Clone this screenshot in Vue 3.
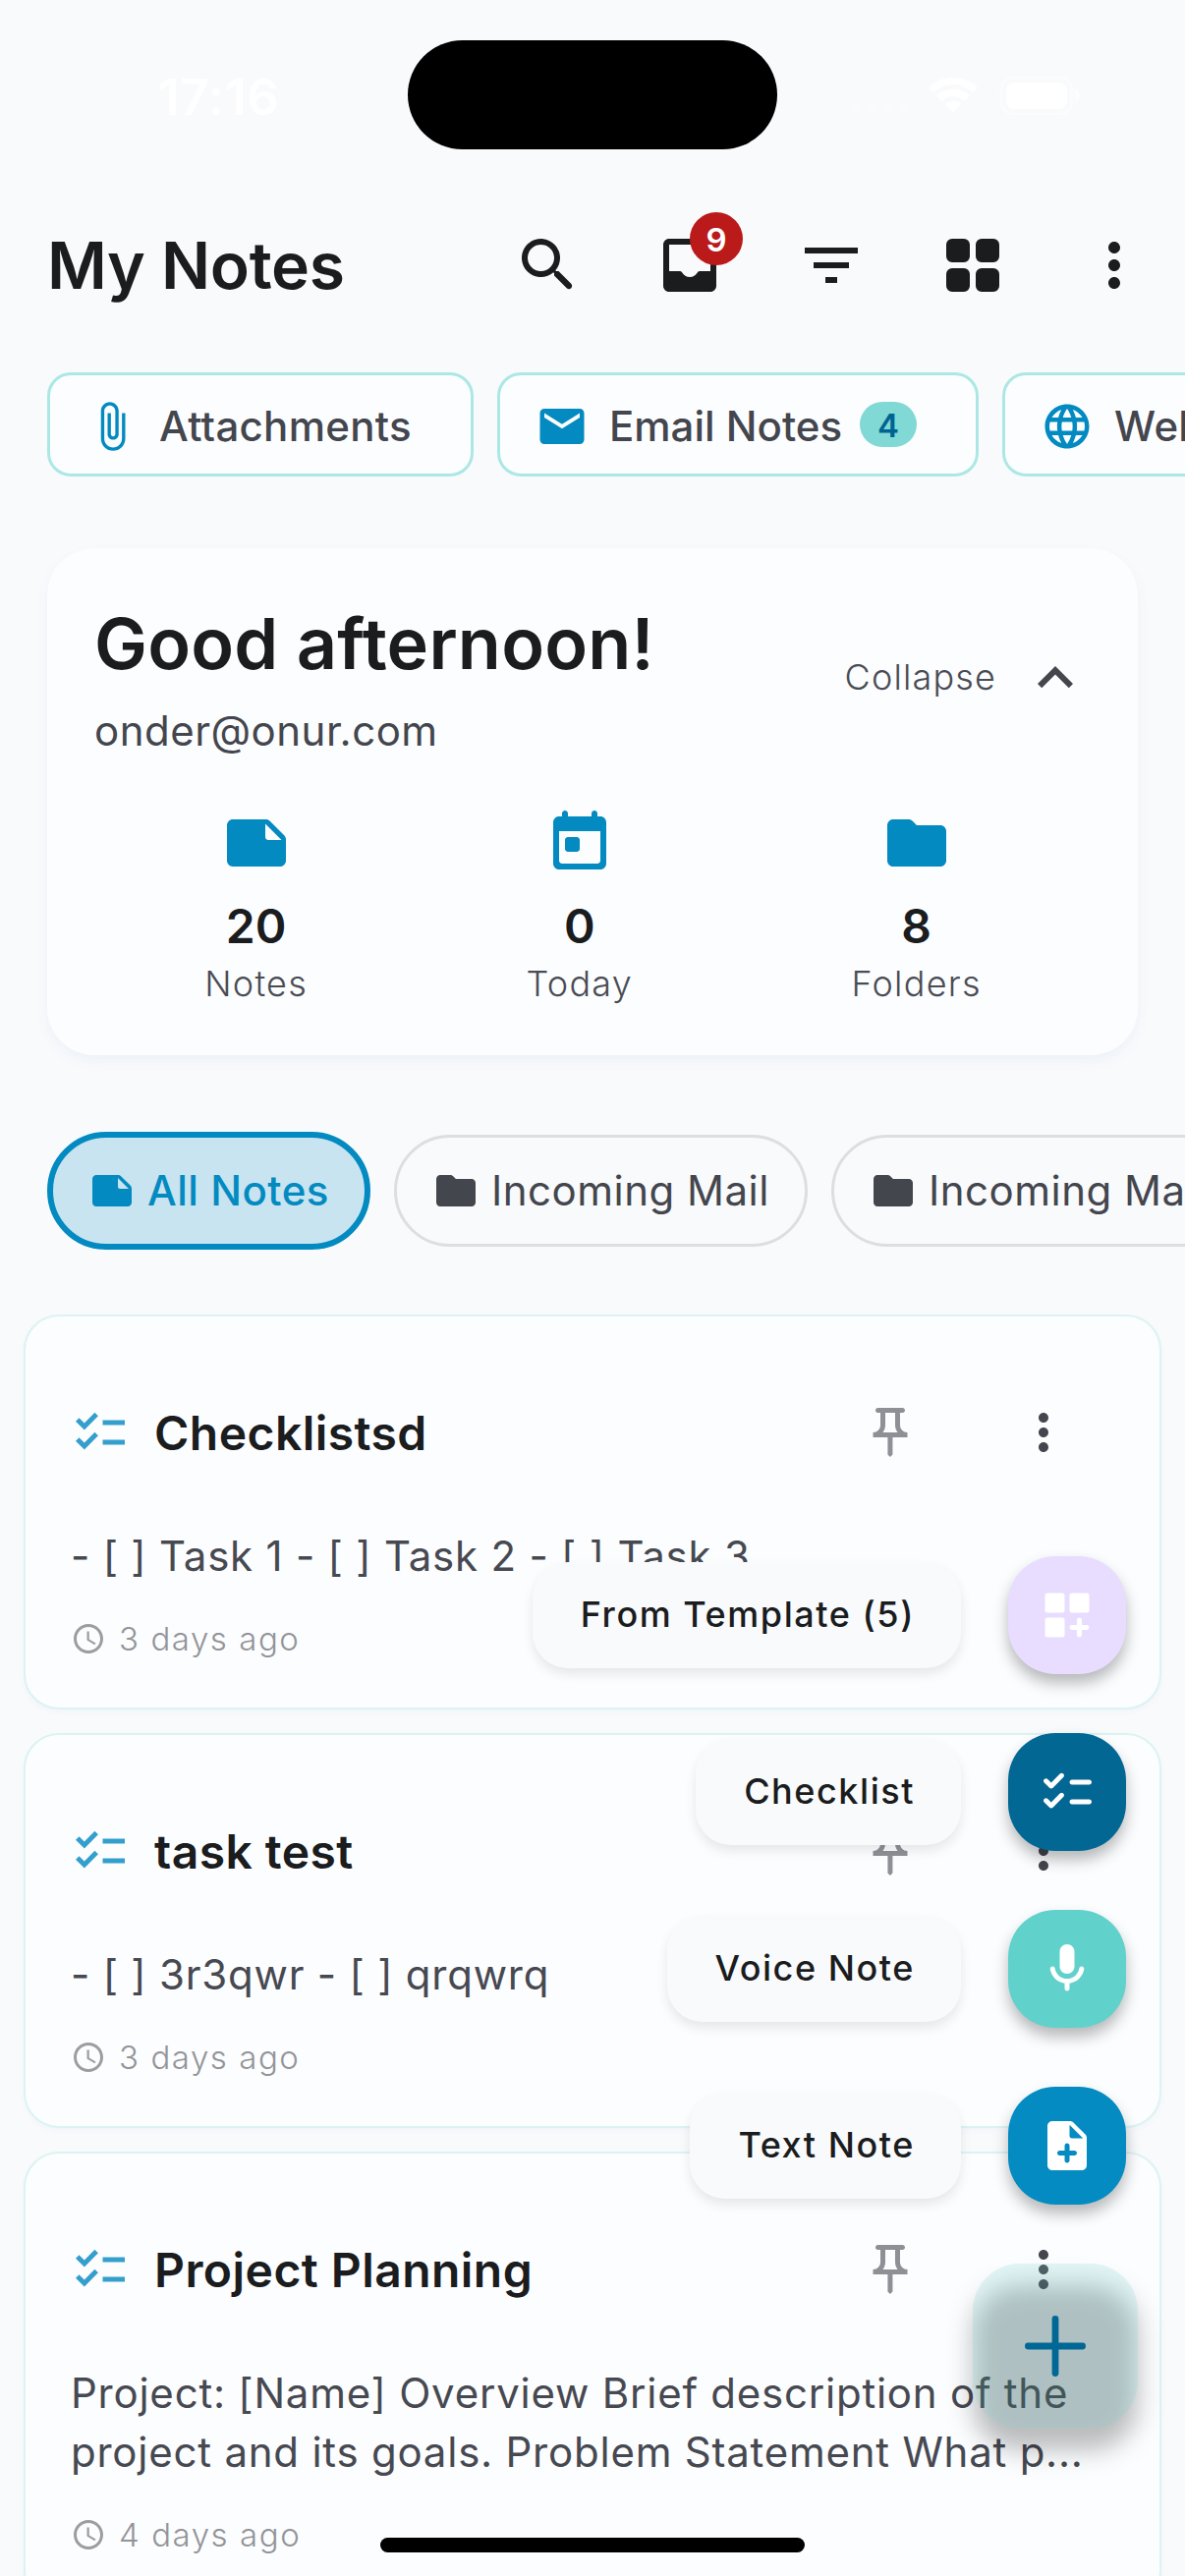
<script setup>
const icons = {
  search:
    'M15.5 14h-.79l-.28-.27c1.2-1.4 1.82-3.31 1.48-5.34-.47-2.78-2.79-5-5.59-5.34-4.23-.52-7.79 3.04-7.27 7.27.34 2.8 2.56 5.12 5.34 5.59 2.03.34 3.94-.28 5.34-1.48l.27.28v.79l4.25 4.25c.41.41 1.08.41 1.49 0 .41-.41.41-1.08 0-1.49L15.5 14zm-6 0C7.01 14 5 11.99 5 9.5S7.01 5 9.5 5 14 7.01 14 9.5 11.99 14 9.5 14z',
  inbox:
    'M19 3H5c-1.1 0-2 .9-2 2v14c0 1.1.9 2 2 2h14c1.1 0 2-.9 2-2V5c0-1.1-.9-2-2-2zm0 11h-3.56c-.36 0-.68.19-.86.5-.52.9-1.47 1.5-2.58 1.5s-2.06-.6-2.58-1.5c-.18-.31-.51-.5-.86-.5H5V5h14v9z',
  filter: 'M10 18h4v-2h-4v2zM3 6v2h18V6H3zm3 7h12v-2H6v2z',
  grid:
    'M5 3h4a2 2 0 0 1 2 2v4a2 2 0 0 1-2 2H5a2 2 0 0 1-2-2V5a2 2 0 0 1 2-2zM15 3h4a2 2 0 0 1 2 2v4a2 2 0 0 1-2 2h-4a2 2 0 0 1-2-2V5a2 2 0 0 1 2-2zM5 13h4a2 2 0 0 1 2 2v4a2 2 0 0 1-2 2H5a2 2 0 0 1-2-2v-4a2 2 0 0 1 2-2zM15 13h4a2 2 0 0 1 2 2v4a2 2 0 0 1-2 2h-4a2 2 0 0 1-2-2v-4a2 2 0 0 1 2-2z',
  more:
    'M12 8c1.1 0 2-.9 2-2s-.9-2-2-2-2 .9-2 2 .9 2 2 2zm0 2c-1.1 0-2 .9-2 2s.9 2 2 2 2-.9 2-2-.9-2-2-2zm0 6c-1.1 0-2 .9-2 2s.9 2 2 2 2-.9 2-2-.9-2-2-2z',
  attach:
    'M16.5 6v11.5c0 2.21-1.79 4-4 4s-4-1.79-4-4V5c0-1.38 1.12-2.5 2.5-2.5s2.5 1.12 2.5 2.5v10.5c0 .55-.45 1-1 1s-1-.45-1-1V6H10v9.5c0 1.38 1.12 2.5 2.5 2.5s2.5-1.12 2.5-2.5V5c0-2.21-1.79-4-4-4S7 2.79 7 5v12.5c0 3.04 2.46 5.5 5.5 5.5s5.5-2.46 5.5-5.5V6h-1.5z',
  mail:
    'M20 4H4c-1.1 0-1.99.9-1.99 2L2 18c0 1.1.9 2 2 2h16c1.1 0 2-.9 2-2V6c0-1.1-.9-2-2-2zm0 4l-8 5-8-5V6l8 5 8-5v2z',
  globe:
    'M11.99 2C6.47 2 2 6.48 2 12s4.47 10 9.99 10C17.52 22 22 17.52 22 12S17.52 2 11.99 2zm6.93 6h-2.95c-.32-1.25-.78-2.45-1.38-3.56 1.84.63 3.37 1.91 4.33 3.56zM12 4.04c.83 1.2 1.48 2.53 1.91 3.96h-3.82c.43-1.43 1.08-2.76 1.91-3.96zM4.26 14C4.1 13.36 4 12.69 4 12s.1-1.36.26-2h3.38c-.08.66-.14 1.32-.14 2s.06 1.34.14 2H4.26zm.82 2h2.95c.32 1.25.78 2.45 1.38 3.56-1.84-.63-3.37-1.9-4.33-3.56zm2.95-8H5.08c.96-1.66 2.49-2.93 4.33-3.56C8.81 5.55 8.35 6.75 8.03 8zM12 19.96c-.83-1.2-1.48-2.53-1.91-3.96h3.82c-.43 1.43-1.08 2.76-1.91 3.96zM14.34 14H9.66c-.09-.66-.16-1.32-.16-2s.07-1.35.16-2h4.68c.09.65.16 1.32.16 2s-.07 1.34-.16 2zm.25 5.56c.6-1.11 1.06-2.31 1.38-3.56h2.95c-.96 1.65-2.49 2.93-4.33 3.56zM16.36 14c.08-.66.14-1.32.14-2s-.06-1.34-.14-2h3.38c.16.64.26 1.31.26 2s-.1 1.36-.26 2h-3.38z',
  expandLess: 'M12 8l-6 6 1.41 1.41L12 10.83l4.59 4.58L18 14z',
  note:
    'M21.41 9.41l-4.83-4.83c-.37-.37-.88-.58-1.41-.58H4c-1.1 0-2 .9-2 2v12.01c0 1.1.89 1.99 1.99 1.99H20c1.1 0 2-.9 2-2v-7.17c0-.53-.21-1.04-.59-1.42zM15 5.5l5.5 5.5H16c-.55 0-1-.45-1-1V5.5z',
  today:
    'M19 3h-1V2c0-.55-.45-1-1-1s-1 .45-1 1v1H8V2c0-.55-.45-1-1-1s-1 .45-1 1v1H5c-1.11 0-1.99.9-1.99 2L3 19c0 1.1.89 2 2 2h14c1.1 0 2-.9 2-2V5c0-1.1-.9-2-2-2zm-1 16H6c-.55 0-1-.45-1-1V8h14v10c0 .55-.45 1-1 1zM8 10h3c.55 0 1 .45 1 1v3c0 .55-.45 1-1 1H8c-.55 0-1-.45-1-1v-3c0-.55.45-1 1-1z',
  folder:
    'M10.59 4.59C10.21 4.21 9.7 4 9.17 4H4c-1.1 0-1.99.9-1.99 2L2 18c0 1.1.9 2 2 2h16c1.1 0 2-.9 2-2V8c0-1.1-.9-2-2-2h-8l-1.41-1.41z',
  checklist:
    'M22 7h-9v2h9V7zm0 8h-9v2h9v-2zM5.54 11L2 7.46l1.41-1.41 2.12 2.12 4.24-4.24 1.41 1.41L5.54 11zm0 8L2 15.46l1.41-1.41 2.12 2.12 4.24-4.24 1.41 1.41L5.54 19z',
  pin:
    'M14 4v5c0 1.12.37 2.16 1 3H9c.65-.86 1-1.9 1-3V4h4m3-2H7c-.55 0-1 .45-1 1s.45 1 1 1h1v5c0 1.66-1.34 3-3 3v2h5.97v7l1 1 1-1v-7H19v-2c-1.66 0-3-1.34-3-3V4h1c.55 0 1-.45 1-1s-.45-1-1-1z',
  clock:
    'M11.99 2C6.47 2 2 6.48 2 12s4.47 10 9.99 10C17.52 22 22 17.52 22 12S17.52 2 11.99 2zM12 20c-4.42 0-8-3.58-8-8s3.58-8 8-8 8 3.58 8 8-3.58 8-8 8zm.5-13H11v6l5.25 3.15.75-1.23-4.5-2.67z',
  template:
    'M4 3h6a1 1 0 0 1 1 1v6a1 1 0 0 1-1 1H4a1 1 0 0 1-1-1V4a1 1 0 0 1 1-1zM14 3h6a1 1 0 0 1 1 1v6a1 1 0 0 1-1 1h-6a1 1 0 0 1-1-1V4a1 1 0 0 1 1-1zM4 13h6a1 1 0 0 1 1 1v6a1 1 0 0 1-1 1H4a1 1 0 0 1-1-1v-6a1 1 0 0 1 1-1zM17 13c.55 0 1 .45 1 1v2h2c.55 0 1 .45 1 1s-.45 1-1 1h-2v2c0 .55-.45 1-1 1s-1-.45-1-1v-2h-2c-.55 0-1-.45-1-1s.45-1 1-1h2v-2c0-.55.45-1 1-1z',
  checklistRound:
    'M14 7h7c.55 0 1 .45 1 1s-.45 1-1 1h-7c-.55 0-1-.45-1-1s.45-1 1-1zM14 15h7c.55 0 1 .45 1 1s-.45 1-1 1h-7c-.55 0-1-.45-1-1s.45-1 1-1zM4.83 10.29l-2.12-2.12c-.39-.39-.39-1.02 0-1.41.39-.39 1.02-.39 1.41 0l1.41 1.41 3.54-3.54c.39-.39 1.02-.39 1.41 0 .39.39.39 1.02 0 1.41l-4.24 4.24c-.39.4-1.02.4-1.41.01zM4.83 18.29l-2.12-2.12c-.39-.39-.39-1.02 0-1.41.39-.39 1.02-.39 1.41 0l1.41 1.41 3.54-3.54c.39-.39 1.02-.39 1.41 0 .39.39.39 1.02 0 1.41l-4.24 4.24c-.39.4-1.02.4-1.41.01z',
  mic:
    'M12 14c1.66 0 3-1.34 3-3V5c0-1.66-1.34-3-3-3S9 3.34 9 5v6c0 1.66 1.34 3 3 3zm5.91-3c-.49 0-.9.36-.98.85C16.52 14.2 14.47 16 12 16s-4.52-1.8-4.93-4.15c-.08-.49-.49-.85-.98-.85-.61 0-1.09.54-1 1.14.49 3 2.89 5.35 5.91 5.78V20c0 .55.45 1 1 1s1-.45 1-1v-2.08c3.02-.43 5.42-2.78 5.91-5.78.1-.6-.39-1.14-1-1.14z',
  noteAdd:
    'M14.59 2.59c-.38-.38-.89-.59-1.42-.59H6c-1.1 0-2 .9-2 2v16c0 1.1.89 2 1.99 2H18c1.1 0 2-.9 2-2V8.83c0-.53-.21-1.04-.59-1.41l-4.82-4.83zM15 16h-2v2c0 .55-.45 1-1 1s-1-.45-1-1v-2H9c-.55 0-1-.45-1-1s.45-1 1-1h2v-2c0-.55.45-1 1-1s1 .45 1 1v2h2c.55 0 1 .45 1 1s-.45 1-1 1zm-2-8V3.5L18.5 9H14c-.55 0-1-.45-1-1z',
}

const toolbar = [
  { icon: 'search', label: 'Search' },
  { icon: 'inbox', label: 'Inbox', badge: 9 },
  { icon: 'filter', label: 'Filter' },
  { icon: 'grid', label: 'Grid view' },
  { icon: 'more', label: 'More' },
]

const sources = [
  { icon: 'attach', label: 'Attachments' },
  { icon: 'mail', label: 'Email Notes', count: 4 },
  { icon: 'globe', label: 'Web Clips' },
]

const stats = [
  { icon: 'note', value: 20, label: 'Notes' },
  { icon: 'today', value: 0, label: 'Today' },
  { icon: 'folder', value: 8, label: 'Folders' },
]

const folders = [
  { icon: 'note', label: 'All Notes', active: true },
  { icon: 'folder', label: 'Incoming Mail' },
  { icon: 'folder', label: 'Incoming Mail' },
]

const notes = [
  { title: 'Checklistsd', lines: ['- [ ] Task 1 - [ ] Task 2 - [ ] Task 3'], time: '3 days ago' },
  { title: 'task test', lines: ['- [ ] 3r3qwr - [ ] qrqwrq'], time: '3 days ago' },
  {
    title: 'Project Planning',
    lines: [
      'Project: [Name] Overview Brief description of the',
      'project and its goals. Problem Statement What p...',
    ],
    time: '4 days ago',
  },
]

const actions = [
  { label: 'From Template (5)', icon: 'template', tone: 'lavender' },
  { label: 'Checklist', icon: 'checklistRound', tone: 'navy' },
  { label: 'Voice Note', icon: 'mic', tone: 'teal' },
  { label: 'Text Note', icon: 'noteAdd', tone: 'blue' },
]
</script>

<template>
  <div class="screen">
    <div class="status">
      <span class="clock">17:16</span>
      <span class="island"></span>
      <span class="signals">
        <svg width="240" height="40" viewBox="0 0 240 40">
          <g opacity=".2">
            <circle cx="8" cy="34" r="4.5" /><circle cx="24" cy="34" r="4.5" />
            <circle cx="40" cy="34" r="4.5" /><circle cx="56" cy="34" r="4.5" />
          </g>
          <path d="M82 12a36 36 0 0 1 50 0l-5 5.500a28.500 28.500 0 0 0-40 0zM90 20.500a24.500 24.500 0 0 1 34 0l-5.500 5.500a16.500 16.500 0 0 0-23 0zM98.500 29a12.500 12.500 0 0 1 17 0l-8.500 9z" />
          <rect x="156" y="2" width="72" height="37" rx="12" fill="none" stroke="#fff" stroke-width="3" opacity=".4" />
          <rect x="161" y="7" width="62" height="27" rx="8" />
          <path d="M231 14c4 1.500 5 4 5 6.500s-1 5-5 6.500z" opacity=".5" />
        </svg>
      </span>
    </div>

    <header class="appbar">
      <h1>My Notes</h1>
      <nav class="tools">
        <button v-for="t in toolbar" :key="t.icon" class="tool" :aria-label="t.label">
          <svg viewBox="0 0 24 24"><path :d="icons[t.icon]" /></svg>
          <span v-if="t.badge" class="badge">{{ t.badge }}</span>
        </button>
      </nav>
    </header>

    <div class="sources">
      <div v-for="s in sources" :key="s.label" class="source">
        <svg viewBox="0 0 24 24"><path :d="icons[s.icon]" /></svg>
        <span class="source-label" :class="{ counted: s.count }">{{ s.label }}</span>
        <span v-if="s.count" class="count">{{ s.count }}</span>
      </div>
    </div>

    <section class="summary">
      <div class="greeting">
        <div>
          <h2>Good afternoon!</h2>
          <p>onder@onur.com</p>
        </div>
        <div class="collapse">
          <span>Collapse</span>
          <svg viewBox="0 0 24 24"><path :d="icons.expandLess" /></svg>
        </div>
      </div>
      <div class="stats">
        <div v-for="s in stats" :key="s.label" class="stat">
          <svg viewBox="0 0 24 24"><path :d="icons[s.icon]" /></svg>
          <strong>{{ s.value }}</strong>
          <span>{{ s.label }}</span>
        </div>
      </div>
    </section>

    <div class="folders">
      <div v-for="(f, i) in folders" :key="i" class="folder" :class="{ active: f.active }">
        <svg viewBox="0 0 24 24"><path :d="icons[f.icon]" /></svg>
        <span>{{ f.label }}</span>
      </div>
    </div>

    <main class="notes">
      <article v-for="n in notes" :key="n.title" class="note">
        <div class="note-head">
          <svg class="kind" viewBox="0 0 24 24"><path :d="icons.checklist" /></svg>
          <h3>{{ n.title }}</h3>
          <svg class="pin" viewBox="0 0 24 24"><path :d="icons.pin" /></svg>
          <svg class="menu" viewBox="0 0 24 24"><path :d="icons.more" /></svg>
        </div>
        <div class="note-body">
          <div v-for="l in n.lines" :key="l">{{ l }}</div>
        </div>
        <div class="note-time">
          <svg viewBox="0 0 24 24"><path :d="icons.clock" /></svg>
          <span>{{ n.time }}</span>
        </div>
      </article>
    </main>

    <div class="speed-dial">
      <div v-for="a in actions" :key="a.label" class="action">
        <span class="action-label">{{ a.label }}</span>
        <button class="mini" :class="a.tone" :aria-label="a.label">
          <svg viewBox="0 0 24 24"><path :d="icons[a.icon]" /></svg>
        </button>
      </div>
    </div>

    <button class="fab" aria-label="Close menu">
      <svg viewBox="0 0 62 62"><path d="M31 3.400v55.200M3.400 31h55.200" /></svg>
    </button>

    <div class="home-bar"></div>
  </div>
</template>

<style>
body {
  margin: 0;
  background: #f9fafc;
}
</style>

<style scoped>
.screen {
  position: relative;
  width: 1206px;
  height: 2622px;
  overflow: hidden;
  background: #f9fafc;
  color: #1a1c1e;
  font-family: Inter, 'Liberation Sans', sans-serif;
}

h1, h2, h3, p { margin: 0; }

button {
  padding: 0;
  border: 0;
  background: none;
}

svg {
  display: block;
  flex: none;
  fill: currentColor;
}

.status {
  display: grid;
  grid-template-columns: 415px 376px 415px;
  height: 186px;
}

.clock {
  padding: 68px 0 0 161px;
  font-size: 51px;
  line-height: 62px;
  font-weight: 600;
  letter-spacing: 0.8px;
  color: #fff;
}

.island {
  height: 111px;
  margin-top: 41px;
  border-radius: 56px;
  background: #000;
}

.signals { padding: 77px 0 0 72px; }
.signals svg { fill: #fff; }

.appbar {
  display: flex;
  align-items: center;
  justify-content: space-between;
  height: 168px;
  padding-left: 48px;
}

h1 {
  font-size: 66px;
  line-height: 84px;
  font-weight: 600;
  letter-spacing: -0.3px;
}

.tools { display: flex; }

.tool {
  position: relative;
  display: grid;
  place-items: center;
  width: 144px;
  height: 144px;
  color: #1a1c1e;
}

.tool svg {
  width: 72px;
  height: 72px;
}

.badge {
  position: absolute;
  top: 18px;
  left: 72px;
  width: 54px;
  height: 54px;
  border-radius: 50%;
  background: #ba1a1a;
  color: #fff;
  font: 600 33px/56px Inter, sans-serif;
  text-align: center;
}

.sources {
  display: flex;
  gap: 24px;
  height: 106px;
  margin-top: 25px;
  padding-left: 48px;
}

.source {
  box-sizing: border-box;
  flex: none;
  display: flex;
  align-items: center;
  height: 106px;
  padding: 4px 60px 0 36px;
  border: 3px solid #abe8e5;
  border-radius: 24px;
  background: #fcfdff;
  color: #44464e;
}

.source svg {
  width: 54px;
  height: 54px;
  margin-right: 21px;
  color: #038ac1;
}

.source-label {
  font-size: 42px;
  line-height: 60px;
  font-weight: 500;
  letter-spacing: 0.3px;
  white-space: nowrap;
}

.source-label.counted { letter-spacing: 0; }

.count {
  width: 58px;
  height: 46px;
  margin: -4px 0 0 18px;
  border-radius: 24px;
  background: #80d9d4;
  color: #006493;
  font-size: 33px;
  line-height: 48px;
  font-weight: 600;
  text-align: center;
}

.summary {
  box-sizing: border-box;
  height: 516px;
  margin: 73px 48px 0;
  padding: 48px;
  border-radius: 48px;
  background: #fcfdff;
  box-shadow: 0 6px 14px rgba(3, 105, 150, 0.05);
}

.greeting {
  display: flex;
  justify-content: space-between;
  align-items: center;
  height: 168px;
}

h2 {
  font-size: 72px;
  line-height: 98px;
  font-weight: 600;
  letter-spacing: 0.2px;
}

.greeting p {
  margin-top: 10px;
  padding-bottom: 1px;
  font-size: 42px;
  line-height: 60px;
  font-weight: 400;
  letter-spacing: 0.5px;
  color: #44464e;
}

.collapse {
  display: flex;
  align-items: center;
  gap: 24px;
  font-size: 36px;
  line-height: 48px;
  font-weight: 300;
  letter-spacing: 1.15px;
  color: #4a4c54;
}

.collapse span { margin-bottom: 2px; }

.collapse svg {
  width: 72px;
  height: 72px;
  color: #44464e;
}

.stats {
  display: flex;
  justify-content: space-around;
  margin: 48px 0 0 1px;
}

.stat {
  display: flex;
  flex-direction: column;
  align-items: center;
}

.stat svg {
  width: 72px;
  height: 72px;
  color: #038ac1;
}

.stat strong {
  margin-top: 13px;
  font-size: 48px;
  line-height: 72px;
  font-weight: 600;
}

.stat span {
  margin-top: -2px;
  font-size: 36px;
  line-height: 48px;
  font-weight: 300;
  letter-spacing: 1.25px;
  color: #4a4c54;
}

.folders {
  display: flex;
  align-items: center;
  gap: 24px;
  height: 120px;
  margin-top: 78px;
  padding-left: 48px;
}

.folder {
  box-sizing: border-box;
  flex: none;
  display: flex;
  align-items: center;
  gap: 12px;
  height: 114px;
  padding: 0 36px;
  border: 3px solid #dcdee0;
  border-radius: 60px;
  color: #44464e;
  font-size: 42px;
  line-height: 58px;
  font-weight: 400;
  letter-spacing: 0.5px;
  white-space: nowrap;
}

.folder.active {
  height: 120px;
  border: 6px solid #038ac1;
  background: #c8e4f0;
  color: #038ac1;
  font-weight: 500;
}

.folder svg {
  width: 48px;
  height: 48px;
}

.notes {
  display: flex;
  flex-direction: column;
  gap: 24px;
  margin: 66px 24px 0;
}

.note {
  box-sizing: border-box;
  padding: 46px;
  border: 2px solid #dbf3f3;
  border-radius: 36px;
  background: #fcfdff;
  box-shadow: 0 3px 6px rgba(3, 105, 150, 0.03);
}

.note-head {
  display: flex;
  align-items: center;
  height: 144px;
}

.note-head svg {
  width: 60px;
  height: 60px;
}

.note-head .kind { color: #349fcd; }

h3 {
  flex: 1;
  margin-left: 25px;
  padding-top: 1px;
  font-size: 48px;
  line-height: 72px;
  font-weight: 600;
  letter-spacing: 0.45px;
}

.note-head .pin {
  margin-right: 96px;
  color: #8f9096;
}

.note-head .menu {
  margin-right: 42px;
  color: #44464e;
}

.note-body {
  margin-top: 24px;
  font-size: 42px;
  line-height: 60px;
  font-weight: 400;
  letter-spacing: 0.77px;
  color: #474951;
  white-space: nowrap;
}

.note-time {
  display: flex;
  align-items: center;
  gap: 13px;
  height: 48px;
  margin-top: 30px;
  font-size: 33px;
  font-weight: 300;
  letter-spacing: 1.55px;
  color: #939498;
}

.note-time svg {
  width: 36px;
  height: 36px;
  color: #9c9da0;
}

/* Expanded action menu floating over the note list */
.speed-dial {
  position: absolute;
  top: 1584px;
  right: 60px;
  display: flex;
  flex-direction: column;
  align-items: flex-end;
  gap: 60px;
}

.action {
  display: flex;
  align-items: center;
  gap: 48px;
}

.action-label {
  height: 108px;
  padding: 0 47px 0 49px;
  border-radius: 36px;
  background: #f9fafc;
  box-shadow: 0 6px 12px rgba(0, 0, 0, 0.09);
  font-size: 36px;
  line-height: 107px;
  font-weight: 500;
  letter-spacing: 1.55px;
}

.mini {
  display: grid;
  place-items: center;
  width: 120px;
  height: 120px;
  border-radius: 48px;
  color: #fff;
  box-shadow: 0 9px 15px rgba(0, 0, 0, 0.28);
}

.mini svg {
  width: 60px;
  height: 60px;
}

.lavender { background: #e8ddff; }
.navy { background: #036794; }
.teal { background: #61d1cc; }
.blue { background: #048bc2; }

.fab {
  position: absolute;
  left: 990px;
  top: 2304px;
  display: grid;
  place-items: center;
  width: 168px;
  height: 168px;
}

/* The button face is translucent, so its shadow stays visible through it */
.fab::before,
.fab::after {
  content: '';
  position: absolute;
  inset: 0;
  border-radius: 48px;
}

.fab::before {
  background: rgba(0, 0, 0, 0.26);
  filter: blur(13px);
  transform: translateY(22px);
}

.fab::after { background: rgba(125, 216, 211, 0.2); }

.fab svg {
  position: relative;
  z-index: 1;
  width: 62px;
  height: 62px;
  fill: none;
  stroke: #016896;
  stroke-width: 6.8;
  stroke-linecap: round;
}

.home-bar {
  position: absolute;
  left: 387px;
  bottom: 24px;
  width: 432px;
  height: 15px;
  border-radius: 8px;
  background: #000;
}
</style>
